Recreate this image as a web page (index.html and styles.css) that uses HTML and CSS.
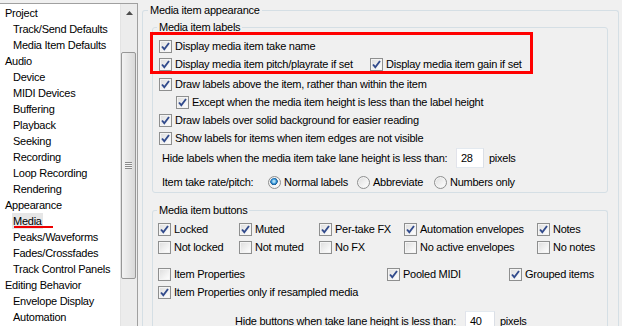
FILE: index.html
```html
<!doctype html>
<html>
<head>
	<meta charset="utf-8" />
	<title>Preferences - Media</title>
	<link rel="stylesheet" href="styles.css">
</head>
<body>
	<div class="window">
		<nav class="tree">
			<ul class="tree-items">
				<li class="top">Project</li>
				<li>Track/Send Defaults</li>
				<li>Media Item Defaults</li>
				<li class="top">Audio</li>
				<li>Device</li>
				<li>MIDI Devices</li>
				<li>Buffering</li>
				<li>Playback</li>
				<li>Seeking</li>
				<li>Recording</li>
				<li>Loop Recording</li>
				<li>Rendering</li>
				<li class="top">Appearance</li>
				<li><span class="selected">Media</span></li>
				<li>Peaks/Waveforms</li>
				<li>Fades/Crossfades</li>
				<li>Track Control Panels</li>
				<li class="top">Editing Behavior</li>
				<li>Envelope Display</li>
				<li>Automation</li>
			</ul>
			<div class="scrollbar">
				<div class="scroll-up"><svg width="7" height="4" viewBox="0 0 7 4"><path d="M0 4 L3.5 0 L7 4 Z" fill="#4d4d4d"/></svg></div>
				<div class="thumb">
					<div class="grip"></div>
				</div>
			</div>
		</nav>

		<main class="page">
			<fieldset class="group outer">
				<legend>Media item appearance</legend>

				<fieldset class="group labels">
					<legend>Media item labels</legend>

					<div class="row r1">
						<label class="check on"><span class="box"></span>Display media item take name</label>
					</div>
					<div class="row r2">
						<label class="check on w-pitch"><span class="box"></span>Display media item pitch/playrate if set</label>
						<label class="check on"><span class="box"></span>Display media item gain if set</label>
					</div>
					<div class="row r3">
						<label class="check on"><span class="box"></span>Draw labels above the item, rather than within the item</label>
					</div>
					<div class="row indent">
						<label class="check on"><span class="box"></span>Except when the media item height is less than the label height</label>
					</div>
					<div class="row">
						<label class="check on"><span class="box"></span>Draw labels over solid background for easier reading</label>
					</div>
					<div class="row">
						<label class="check on"><span class="box"></span>Show labels for items when item edges are not visible</label>
					</div>
					<div class="row field-row hide-labels">
						<span class="field-label w-hide">Hide labels when the media item take lane height is less than:</span>
						<span class="textbox">28</span>
						<span>pixels</span>
					</div>
					<div class="row rate">
						<span class="field-label w-rate">Item take rate/pitch:</span>
						<label class="radio on w-normal"><span class="dot"></span>Normal labels</label>
						<label class="radio w-abbr"><span class="dot"></span>Abbreviate</label>
						<label class="radio"><span class="dot"></span>Numbers only</label>
					</div>
				</fieldset>

				<fieldset class="group buttons">
					<legend>Media item buttons</legend>

					<div class="button-grid">
						<label class="check on"><span class="box"></span>Locked</label>
						<label class="check on"><span class="box"></span>Muted</label>
						<label class="check on"><span class="box"></span>Per-take FX</label>
						<label class="check on"><span class="box"></span>Automation envelopes</label>
						<label class="check on"><span class="box"></span>Notes</label>

						<label class="check"><span class="box"></span>Not locked</label>
						<label class="check"><span class="box"></span>Not muted</label>
						<label class="check"><span class="box"></span>No FX</label>
						<label class="check"><span class="box"></span>No active envelopes</label>
						<label class="check"><span class="box"></span>No notes</label>
					</div>

					<div class="row props">
						<label class="check w-props"><span class="box"></span>Item Properties</label>
						<label class="check on w-pooled"><span class="box"></span>Pooled MIDI</label>
						<label class="check on"><span class="box"></span>Grouped items</label>
					</div>
					<div class="row">
						<label class="check on"><span class="box"></span>Item Properties only if resampled media</label>
					</div>
					<div class="row field-row hide-buttons">
						<span class="field-label w-hidebtn">Hide buttons when take lane height is less than:</span>
						<span class="textbox wide">40</span>
						<span>pixels</span>
					</div>
				</fieldset>
			</fieldset>
		</main>
	</div>

	<!-- annotation marks drawn over the dialog -->
	<div class="mark-box"></div>
	<div class="mark-line"></div>
</body>
</html>
```

FILE: styles.css
```css
html, body {
	margin: 0;
	width: 100%;
	height: 100%;
	overflow: hidden;
	background: #f0f0f0;
	color: #000;
	font-family: "Liberation Sans", Arial, sans-serif;
	font-size: 11px;
	letter-spacing: -0.25px;
}

.window {
	display: flex;
	padding-top: 3px;
	height: calc(100% - 3px);
}

/* left tree */
.tree {
	display: flex;
	width: 137px;
	height: 323px;
	background: #fff;
	border-top: 1px solid #a0a0a0;
	border-right: 1px solid #a0a0a0;
	flex-shrink: 0;
	overflow: hidden;
}

.tree-items {
	flex: 1;
	list-style: none;
	margin: 0;
	padding: 1px 0 0 0;
}

.tree-items li {
	height: 16px;
	line-height: 16px;
	padding-left: 13px;
	white-space: nowrap;
}

.tree-items li.top { padding-left: 5px; }

.tree-items .selected {
	display: inline-block;
	margin-left: -1px;
	padding: 0 1px;
	background: #e6e6e6;
}

.scrollbar {
	width: 17px;
	background: #ececec;
	border-left: 1px solid #e3e3e3;
	box-sizing: border-box;
}

.scroll-up {
	height: 17px;
	display: flex;
	align-items: center;
	justify-content: center;
}

.thumb {
	margin: 31px 1px 0 0;
	height: 225px;
	border: 1px solid #979797;
	border-radius: 2px;
	background: linear-gradient(to right, #f3f3f3, #e6e6e6 50%, #d9d9d9);
	display: flex;
	align-items: center;
	justify-content: center;
}

.grip {
	width: 7px;
	height: 7px;
	background: repeating-linear-gradient(to bottom, #8a8a8a 0 1px, #f4f4f4 1px 2px);
}

/* right page */
.page {
	flex: 1;
	padding-left: 4px;
}

.group {
	margin: 0;
	border: 1px solid #d5dfe5;
	border-radius: 3px;
}

.group legend {
	padding: 0 2px;
	line-height: 14px;
}

.outer {
	width: 477px;
	height: 323px;
	box-sizing: border-box;
	padding: 3px 10px 0 9px;
	border-bottom: none;
	border-radius: 3px 3px 0 0;
}

.outer > legend { margin-left: -4px; }

.labels {
	padding: 3px 0 0 6px;
	height: 173px;
	box-sizing: border-box;
}

.labels > legend { margin-left: -2px; }

.buttons {
	margin-top: 10px;
	padding: 3px 0 0 5px;
	height: 123px;
	box-sizing: border-box;
	border-bottom: none;
	border-radius: 3px 3px 0 0;
}

.buttons > legend { margin-left: -1px; }

.row {
	display: flex;
	align-items: center;
	height: 18px;
	white-space: nowrap;
}

.r3 { margin-top: 2px; }
.indent { padding-left: 17px; }

.field-row { height: 20px; }
.hide-labels { margin: 1px 0 0 3px; }
.rate { margin: 5px 0 0 3px; }
.props { margin-top: 9px; }
.hide-buttons { margin-top: 10px; padding-left: 77px; }

.field-label { display: inline-block; }
.w-hide { width: 294px; }
.w-rate { width: 106px; }
.w-hidebtn { width: 230px; }
.w-pitch { width: 211px; }
.w-normal { width: 89px; }
.w-abbr { width: 77px; }
.w-props { width: 229px; }
.w-pooled { width: 122px; }

.textbox {
	box-sizing: border-box;
	width: 28px;
	height: 20px;
	margin-right: 5px;
	padding: 0 4px;
	line-height: 18px;
	background: #fff;
	border: 1px solid #abadb3;
	border-top-color: #e3e9ef;
	border-left-color: #e2e3ea;
	border-right-color: #dbdfe6;
	border-bottom-color: #e3e9ef;
}

.textbox.wide { width: 30px; }

.check, .radio {
	display: inline-flex;
	align-items: center;
	gap: 3px;
}

.box, .dot {
	display: inline-block;
	box-sizing: border-box;
	width: 13px;
	height: 13px;
	border: 1px solid #8e8f8f;
	background: linear-gradient(135deg, #dcdcdc, #f6f6f6 70%, #fff);
	box-shadow: inset 0 0 0 1px #f4f4f4;
	flex-shrink: 0;
}

.check.on .box {
	background:
		url("data:image/svg+xml;utf8,<svg xmlns='http://www.w3.org/2000/svg' width='11' height='11'><path d='M2 5.5 L4.3 8.2 L9 2' fill='none' stroke='%23324b8c' stroke-width='1.9'/></svg>") center / 11px 11px no-repeat,
		linear-gradient(135deg, #dcdcdc, #f6f6f6 70%, #fff);
}

.dot { border-radius: 50%; }

.radio.on .dot {
	background: radial-gradient(circle at 45% 40%, #a9dcf6 0 1px, #2a8bd0 2.5px, #1d5a92 3.5px, transparent 4px),
		linear-gradient(135deg, #dcdcdc, #f6f6f6 70%, #fff);
}

.button-grid {
	display: grid;
	grid-template-columns: 81px 80px 85px 133px auto;
	grid-auto-rows: 18px;
	align-items: center;
	white-space: nowrap;
}

/* red annotation */
.mark-box {
	position: absolute;
	left: 150px;
	top: 32px;
	width: 377px;
	height: 36px;
	border: 3px solid #f00;
}

.mark-line {
	position: absolute;
	left: 14px;
	top: 226px;
	width: 39px;
	height: 2px;
	background: #e00;
}
```
